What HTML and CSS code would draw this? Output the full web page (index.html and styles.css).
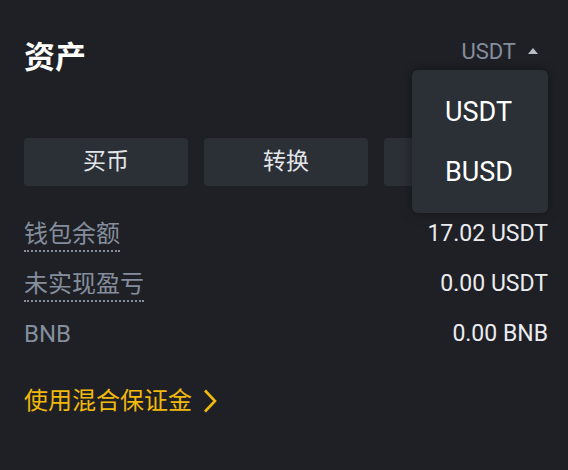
FILE: index.html
```html
<!DOCTYPE html>
<html lang="zh-CN">

<head>
    <meta charset="UTF-8">
    <meta name="viewport" content="width=device-width, initial-scale=1.0">
    <title>资产</title>
    <link rel="stylesheet" href="styles.css">
</head>

<body>

    <div class="panel">
        <div class="header">
            <h1 class="title">资产</h1>
            <div class="select">
                <span>USDT</span>
                <span class="caret"></span>
            </div>
        </div>

        <div class="actions">
            <div class="btn">买币</div>
            <div class="btn">转换</div>
            <!-- covered by the open menu -->
            <div class="btn"></div>
        </div>

        <div class="rows">
            <div class="row">
                <span class="label dotted">钱包余额</span>
                <span class="value">17.02 USDT</span>
            </div>
            <div class="row">
                <span class="label dotted">未实现盈亏</span>
                <span class="value">0.00 USDT</span>
            </div>
            <div class="row">
                <span class="label">BNB</span>
                <span class="value">0.00 BNB</span>
            </div>
        </div>

        <a class="link" href="#">
            使用混合保证金
            <svg width="14" height="24" viewBox="0 0 14 24">
                <polyline points="2,1.5 12,12 2,22.5" fill="none" stroke="#f0b90b" stroke-width="2.6" />
            </svg>
        </a>

        <div class="menu">
            <div class="menu-item">USDT</div>
            <div class="menu-item">BUSD</div>
        </div>
    </div>

</body>

</html>
```

FILE: styles.css
```css
body {
    margin: 0;
    background-color: #1f2026;
    font-family: Roboto, "Noto Sans CJK SC", sans-serif;
    color: #eaecef;
}

.panel {
    position: relative;
    padding: 34px 20px 0 24px;
}

.header {
    display: flex;
    justify-content: space-between;
    align-items: center;
    height: 40px;
}

.title {
    margin: 0;
    font-size: 31px;
    font-weight: 700;
    color: #ffffff;
}

.select {
    display: flex;
    align-items: center;
    margin-right: 10px;
    margin-top: -6px;
    font-size: 22px;
    color: #848e9c;
}

.caret {
    margin-left: 12px;
    border-left: 5.5px solid transparent;
    border-right: 5.5px solid transparent;
    border-bottom: 6px solid #b7bdc6;
}

.actions {
    display: grid;
    grid-template-columns: repeat(3, 1fr);
    gap: 16px;
    margin-top: 64px;
}

.btn {
    height: 48px;
    line-height: 48px;
    text-align: center;
    border-radius: 4px;
    background-color: #2b2f36;
    font-size: 23px;
    color: #e2e5e9;
}

.rows {
    display: flex;
    flex-direction: column;
    gap: 16px;
    margin-top: 32px;
}

.row {
    display: flex;
    justify-content: space-between;
    align-items: flex-start;
    height: 34px;
}

.label {
    font-size: 24px;
    line-height: 32px;
    color: #848e9c;
}

.dotted {
    border-bottom: 2px dotted #848e9c;
}

.value {
    font-size: 23px;
    line-height: 32px;
    color: #eaecef;
}

.link {
    display: inline-flex;
    align-items: center;
    gap: 11px;
    margin-top: 33px;
    font-size: 24px;
    line-height: 32px;
    color: #f0b90b;
    text-decoration: none;
}

.menu {
    position: absolute;
    top: 70px;
    right: 20px;
    width: 136px;
    padding: 12px 0 11px;
    border-radius: 6px;
    background-color: #2b2f36;
    box-shadow: 0 0 12px rgba(0, 0, 0, 0.35);
}

.menu-item {
    height: 60px;
    line-height: 60px;
    padding-left: 33px;
    font-size: 27px;
    color: #ffffff;
}
```
